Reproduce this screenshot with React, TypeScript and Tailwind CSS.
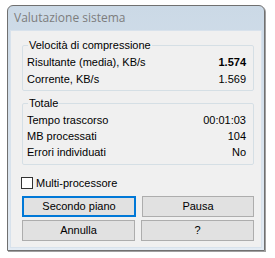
const font = { fontFamily: '"Liberation Sans", Arial, sans-serif' };

const Row = ({ label, value, bold, tall }: { label: string; value: string; bold?: boolean; tall?: boolean }) => (
    <div className={`flex items-center justify-between pl-[3px] pr-[6px] ${tall ? 'h-[17px]' : 'h-[16px]'}`}>
        <span>{label}</span>
        <span className={bold ? 'font-bold' : ''}>{value}</span>
    </div>
);

const Btn = ({ label, focused }: { label: string; focused?: boolean }) => (
    <button
        className={`flex-1 h-[21px] bg-[#e1e1e1] text-[11px] text-black leading-none ${
            focused ? 'border-2 border-[#0078d7]' : 'border border-[#adadad]'
        }`}
    >
        {label}
    </button>
);

export default function App() {
    return (
        <div className="w-[275px] h-[258px] bg-white pl-[7px] pt-[5px]" style={font}>
            <div className="w-[258px] h-[246px] flex flex-col border border-[#707070] rounded-t-[6px] bg-gradient-to-b from-[#cbd9e6] to-[#e3ebf3] shadow-[1px_1px_0_#a0a0a0]">
                {/* barra del titolo */}
                <div className="h-[24px] flex items-center pl-[6px] text-[12px] text-[#7d7d7d]" style={{ fontFamily: '"Open Sans", "Liberation Sans", sans-serif' }}>
                    Valutazione sistema
                </div>
                <div className="flex-1 mx-[2px] mb-[2px] bg-[#f0f0f0] border border-[#d8e2ec] pt-[8px] pl-[11px] pr-[7px] text-[11px] text-black">
                    <fieldset className="border border-[#d5dfe5] rounded-[2px] px-[1px] pb-[2px] pt-[3px]">
                        <legend className="ml-[4px] px-[1px] leading-[12px]">Velocità di compressione</legend>
                        <Row label="Risultante (media), KB/s" value="1.574" bold tall />
                        <Row label="Corrente, KB/s" value="1.569" tall />
                    </fieldset>
                    <fieldset className="mt-[6px] border border-[#d5dfe5] rounded-[2px] px-[1px] pb-[4px] pt-[3px]">
                        <legend className="ml-[4px] px-[1px] leading-[12px]">Totale</legend>
                        <Row label="Tempo trascorso" value="00:01:03" />
                        <Row label="MB processati" value="104" />
                        <Row label="Errori individuati" value="No" />
                    </fieldset>
                    <label className="flex items-center gap-[3px] mt-[10px] ml-[-1px]">
                        <span className="w-[12px] h-[12px] border border-[#333] bg-white" />
                        <span>Multi-processore</span>
                    </label>
                    <div className="flex flex-col gap-[3px] mt-[4px]">
                        <div className="flex gap-[6px]">
                            <Btn label="Secondo piano" focused />
                            <Btn label="Pausa" />
                        </div>
                        <div className="flex gap-[6px]">
                            <Btn label="Annulla" />
                            <Btn label="?" />
                        </div>
                    </div>
                </div>
            </div>
        </div>
    );
}
